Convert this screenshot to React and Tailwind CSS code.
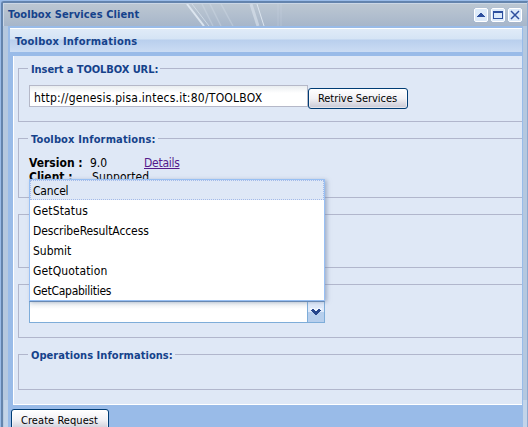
const operations = [
  { name: 'Cancel', tracking: 'tracking-[-0.2px]' },
  { name: 'GetStatus', tracking: 'tracking-[0.15px]' },
  { name: 'DescribeResultAccess', tracking: 'tracking-[-0.1px]' },
  { name: 'Submit', tracking: 'tracking-normal' },
  { name: 'GetQuotation', tracking: 'tracking-[0.15px]' },
  { name: 'GetCapabilities', tracking: 'tracking-[-0.27px]' },
];

function Legend({ children, className = '' }) {
  return (
    <div className={`-mt-[8px] ml-[9px] h-[16px] w-fit bg-[#dfe8f6] pl-[3px] pr-[2px] text-[11px] font-bold leading-[17px] text-[#15428b] ${className}`}>
      {children}
    </div>
  );
}

function Fieldset({ className, children }) {
  return <div className={`ml-[4px] -mr-[2px] border border-[#b1b6cc] ${className}`}>{children}</div>;
}

function ToolButton({ children }) {
  return (
    <div className="h-[14px] w-[14px] rounded-[2px] border border-white bg-[#dceafa] shadow-[0_0_1px_#8fb0dd]">
      <svg className="-ml-px -mt-px" width="14" height="14" viewBox="0 0 14 14" shapeRendering="crispEdges" fill="#2d4f9e">
        {children}
      </svg>
    </div>
  );
}

function PushButton({ className, children }) {
  return (
    <button className={`rounded-[3px] border border-[#003c74] bg-linear-to-b from-white via-[#f1f1f5] to-[#c8c8d4] text-left text-[11px] text-black shadow-[inset_0_0_0_1px_#ffffff80] ${className}`}>
      {children}
    </button>
  );
}

export default function App() {
  return (
    <div className="flex h-[427px] w-[528px] flex-col overflow-hidden whitespace-nowrap bg-[#99bbe8] pl-px pt-px font-['DejaVu_Sans_Condensed','DejaVu_Sans',sans-serif] [font-stretch:condensed]">
      <div className="flex min-h-0 flex-1 flex-col rounded-tl-[3px] border-2 border-b-0 border-r border-[#6484ad] border-r-[#8eaad0] bg-[#b7c9de]">
        <div className="flex h-[23px] shrink-0 border-l border-t border-[#cbd7e6] bg-linear-to-b from-[#bcc7d2] to-[#a7b6ca]">
          <div className="w-[178px] pl-[4px] text-[11px] font-bold leading-[22px] tracking-[0.1px] text-[#15428b]">Toolbox Services Client</div>
          <svg width="104" height="22" viewBox="0 0 104 22" fill="none" stroke="#dce5ef">
            <path d="M5 0L22 22" strokeWidth="2" />
            <path d="M10 0L27 22" strokeWidth="1" opacity=".7" />
            <path d="M20 0L31 22M28 0L39 22M39 0L51 22" strokeWidth="1.5" opacity=".3" />
            <path d="M69 0L76 22" strokeWidth="3" opacity=".6" />
            <path d="M75 0L82 22" strokeWidth="1" />
            <path d="M96 0V22M99 0V22" strokeWidth="1" opacity=".25" />
          </svg>
          <div className="ml-auto mr-[5px] flex gap-[3px] pt-[4px]">
            <ToolButton><path d="M6 5h2v1H6zM5 6h4v1H5zM4 7h6v1H4zM3 8h8v1H3z" /></ToolButton>
            <ToolButton><path d="M2 3h10v8H2zM3 5v5h8V5z" fillRule="evenodd" /></ToolButton>
            <ToolButton><path d="M3 3l8 8M11 3l-8 8" stroke="#2d4f9e" strokeWidth="1.5" shapeRendering="auto" /></ToolButton>
          </div>
        </div>
        <div className="ml-px flex min-h-0 flex-1">
          <div className="flex w-[4px] shrink-0 flex-col justify-end bg-[#b5c8df]"><div className="h-[27px] bg-[#c3d4e9]" /></div>
          <div className="flex min-w-0 flex-1 flex-col bg-[#99bbe8] pl-[2px] pt-[2px]">
            <div className="mr-px h-[24px] shrink-0 border-t border-white bg-[linear-gradient(#e0ebf8_0px,#d5e4f5_10px,#b9cfed_11px,#cbdcf3_23px)] pl-[5px] text-[11px] font-bold leading-[26px] tracking-[0.24px] text-[#15428b]">
              Toolbox Informations
            </div>
            <div className="ml-[3px] mr-px mt-[4px] flex h-[349px] shrink-0 flex-col overflow-hidden border-b border-l border-white bg-[#dfe8f6] pt-[12px]">
              <Fieldset className="h-[54px] shrink-0">
                <Legend className="tracking-[-0.08px]">Insert a TOOLBOX URL:</Legend>
                <div className="ml-[10px] mt-[8px] flex">
                  <div className="h-[22px] w-[279px] border border-[#b5b8c8] bg-[linear-gradient(#e9edf0,#fff_7px)] pl-[4px] text-[12px] leading-[24px] tracking-[0.23px]">http://genesis.pisa.intecs.it:80/TOOLBOX</div>
                  <PushButton className="mt-[3px] h-[21px] w-[100px] pl-[9px] pt-[2px] tracking-[-0.06px]">Retrive Services</PushButton>
                </div>
              </Fieldset>
              <Fieldset className="mt-[16px] h-[60px] shrink-0">
                <Legend className="tracking-[0.15px]">Toolbox Informations:</Legend>
                <div className="ml-[10px] mt-[9px] text-[12px] leading-[14px]">
                  <div className="flex"><b className="w-[61px]">Version :</b><span className="w-[54px]">9.0</span><span className="tracking-[-0.27px] text-[#551a8b] underline">Details</span></div>
                  <div className="flex"><b className="w-[63px]">Client :</b><span className="tracking-[0.12px]">Supported</span></div>
                </div>
              </Fieldset>
              <Fieldset className="mt-[16px] h-[54px] shrink-0" />
              <Fieldset className="mt-[16px] h-[54px] shrink-0">
                <div className="relative ml-[10px] mt-[16px] flex h-[22px] w-[296px] border border-[#7eadd9] border-t-[#6289b8] bg-[linear-gradient(#e9edf0,#fff_7px)]">
                  <div className="ml-auto h-[20px] w-[17px] border-l border-[#7eadd9] bg-linear-to-b from-[#dfeafa] from-50% to-[#b7cfed] to-50%">
                    <svg width="16" height="20" viewBox="0 0 16 20" shapeRendering="crispEdges">
                      <path d="M2 6h5v1h2V6h5v2h-1v1h-1v1h-1v1h-1v1H9v1H7v-1H6v-1H5v-1H4V9H3V8H2z" fill="#eff6ff" />
                      <path d="M4 7h2v1h1v1h2V8h1V7h2v1h1v1h-1v1h-1v1h-1v1H9v1H7v-1H6v-1H5v-1H4V9H3V8h1z" fill="#26468c" />
                    </svg>
                  </div>
                  <div className="absolute -left-px bottom-[21px] h-[122px] w-[296px] border border-[#98c0f4] bg-white text-[12px] shadow-[2px_1px_4px_#7788aa99]">
                    {operations.map(({ name, tracking }, i) => (
                      <div key={name} className={`h-[20px] border border-dotted pl-[2px] leading-[20px] ${tracking} ${i === 0 ? 'border-[#a3bae9] bg-[#dfe8f6]' : 'border-transparent'}`}>
                        {name}
                      </div>
                    ))}
                  </div>
                </div>
              </Fieldset>
              <Fieldset className="mt-[16px] h-[36px] shrink-0">
                <Legend className="tracking-[0.05px]">Operations Informations:</Legend>
              </Fieldset>
            </div>
            <PushButton className="ml-px mt-[4px] h-[22px] w-[98px] shrink-0 pl-[9px] pt-[2px] tracking-[0.06px]">Create Request</PushButton>
          </div>
          <div className="flex w-[4px] shrink-0 flex-col justify-end bg-[#b5c8df]"><div className="h-[27px] bg-[#c3d4e9]" /></div>
        </div>
      </div>
    </div>
  );
}
